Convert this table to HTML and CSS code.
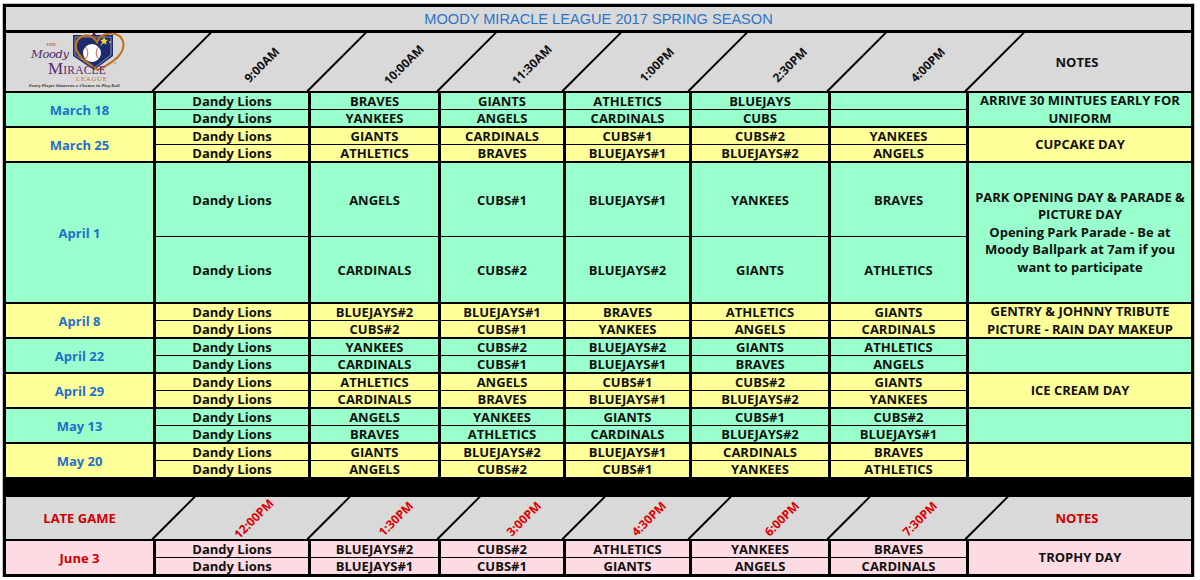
FILE: index.html
```html
<!DOCTYPE html>
<html>
<head>
<meta charset="utf-8">
<title>Moody Miracle League 2017 Spring Season</title>
<link rel="stylesheet" href="styles.css">
</head>
<body>
<div class="sheet">
  <div class="title">MOODY MIRACLE LEAGUE 2017 SPRING SEASON</div>

  <div class="head main">
    <div class="logo-cell">
      <svg class="logo" width="147" height="58" viewBox="0 0 147 58">
        <path d="M88 -1 l2 2.5 -2 1.2 -2 -1.2z" fill="#7a2340"/>
        <path d="M67 2 H107 V23 L88 37 L67 23 Z" fill="#1d2a6b"/>
        <path d="M69 4 H105 V22 L88 35 L69 22 Z" fill="none" stroke="#b9bfd3" stroke-width="0.7"/>
        <path d="M92 37 C80 29 68 21 70 11 C71 4 80 0 86 4 C88 5 90 7 91 9 C93 3 101 -1 109 1 C117 3 120 12 115 20 C111 27 100 33 92 37" fill="none" stroke="#c0741f" stroke-width="2.2" stroke-linecap="round"/>
        <circle cx="86" cy="20" r="9" fill="#ffffff"/>
        <path d="M79.5 14 C82.5 17 82.5 23 79.5 26 M92.5 14 C89.5 17 89.5 23 92.5 26" fill="none" stroke="#c03030" stroke-width="0.8"/>
        <path d="M98 4 l1.2 2.6 2.8 0.3 -2.1 1.9 0.6 2.8 -2.5 -1.4 -2.5 1.4 0.6 -2.8 -2.1 -1.9 2.8 -0.3z" fill="#f2d43a"/>
        <circle cx="104" cy="9" r="0.9" fill="#f2d43a"/>
        <circle cx="95" cy="12" r="0.7" fill="#f2d43a"/>
        <text x="40" y="13" class="lg-the">THE</text>
        <text x="25" y="25" class="lg-moody">Moody</text>
        <text x="42" y="40.5" class="lg-miracle"><tspan class="lg-big">M</tspan>IRACLE</text>
        <text x="108" y="32" class="lg-reg">®</text>
        <text x="70" y="48" class="lg-league">LEAGUE</text>
        <text x="23" y="54" class="lg-tag">Every Player Deserves a Chance to Play Ball</text>
      </svg>
    </div>
    <div class="hcell"><span class="lbl">9:00AM</span></div>
    <div class="hcell"><span class="lbl">10:00AM</span></div>
    <div class="hcell"><span class="lbl">11:30AM</span></div>
    <div class="hcell"><span class="lbl">1:00PM</span></div>
    <div class="hcell"><span class="lbl">2:30PM</span></div>
    <div class="hcell"><span class="lbl">4:00PM</span></div>
    <div class="hcell notes-h"><span>NOTES</span></div>
  </div>

  <div class="body">
    <div class="group green">
      <div class="date">March 18</div>
      <div class="c">Dandy Lions</div><div class="c">Dandy Lions</div>
      <div class="c">BRAVES</div><div class="c">YANKEES</div>
      <div class="c">GIANTS</div><div class="c">ANGELS</div>
      <div class="c">ATHLETICS</div><div class="c">CARDINALS</div>
      <div class="c">BLUEJAYS</div><div class="c">CUBS</div>
      <div class="c"></div><div class="c"></div>
      <div class="note">ARRIVE 30 MINTUES EARLY FOR<br>UNIFORM</div>
    </div>
    <div class="group yellow">
      <div class="date">March 25</div>
      <div class="c">Dandy Lions</div><div class="c">Dandy Lions</div>
      <div class="c">GIANTS</div><div class="c">ATHLETICS</div>
      <div class="c">CARDINALS</div><div class="c">BRAVES</div>
      <div class="c">CUBS#1</div><div class="c">BLUEJAYS#1</div>
      <div class="c">CUBS#2</div><div class="c">BLUEJAYS#2</div>
      <div class="c">YANKEES</div><div class="c">ANGELS</div>
      <div class="note">CUPCAKE DAY</div>
    </div>
    <div class="group green tall">
      <div class="date">April 1</div>
      <div class="c">Dandy Lions</div><div class="c">Dandy Lions</div>
      <div class="c">ANGELS</div><div class="c">CARDINALS</div>
      <div class="c">CUBS#1</div><div class="c">CUBS#2</div>
      <div class="c">BLUEJAYS#1</div><div class="c">BLUEJAYS#2</div>
      <div class="c">YANKEES</div><div class="c">GIANTS</div>
      <div class="c">BRAVES</div><div class="c">ATHLETICS</div>
      <div class="note">PARK OPENING DAY &amp; PARADE &amp;<br>PICTURE DAY<br>Opening Park Parade - Be at<br>Moody Ballpark at 7am if you<br>want to participate</div>
    </div>
    <div class="group yellow">
      <div class="date">April 8</div>
      <div class="c">Dandy Lions</div><div class="c">Dandy Lions</div>
      <div class="c">BLUEJAYS#2</div><div class="c">CUBS#2</div>
      <div class="c">BLUEJAYS#1</div><div class="c">CUBS#1</div>
      <div class="c">BRAVES</div><div class="c">YANKEES</div>
      <div class="c">ATHLETICS</div><div class="c">ANGELS</div>
      <div class="c">GIANTS</div><div class="c">CARDINALS</div>
      <div class="note">GENTRY &amp; JOHNNY TRIBUTE<br>PICTURE - RAIN DAY MAKEUP</div>
    </div>
    <div class="group green">
      <div class="date">April 22</div>
      <div class="c">Dandy Lions</div><div class="c">Dandy Lions</div>
      <div class="c">YANKEES</div><div class="c">CARDINALS</div>
      <div class="c">CUBS#2</div><div class="c">CUBS#1</div>
      <div class="c">BLUEJAYS#2</div><div class="c">BLUEJAYS#1</div>
      <div class="c">GIANTS</div><div class="c">BRAVES</div>
      <div class="c">ATHLETICS</div><div class="c">ANGELS</div>
      <div class="note"></div>
    </div>
    <div class="group yellow">
      <div class="date">April 29</div>
      <div class="c">Dandy Lions</div><div class="c">Dandy Lions</div>
      <div class="c">ATHLETICS</div><div class="c">CARDINALS</div>
      <div class="c">ANGELS</div><div class="c">BRAVES</div>
      <div class="c">CUBS#1</div><div class="c">BLUEJAYS#1</div>
      <div class="c">CUBS#2</div><div class="c">BLUEJAYS#2</div>
      <div class="c">GIANTS</div><div class="c">YANKEES</div>
      <div class="note">ICE CREAM DAY</div>
    </div>
    <div class="group green">
      <div class="date">May 13</div>
      <div class="c">Dandy Lions</div><div class="c">Dandy Lions</div>
      <div class="c">ANGELS</div><div class="c">BRAVES</div>
      <div class="c">YANKEES</div><div class="c">ATHLETICS</div>
      <div class="c">GIANTS</div><div class="c">CARDINALS</div>
      <div class="c">CUBS#1</div><div class="c">BLUEJAYS#2</div>
      <div class="c">CUBS#2</div><div class="c">BLUEJAYS#1</div>
      <div class="note"></div>
    </div>
    <div class="group yellow">
      <div class="date">May 20</div>
      <div class="c">Dandy Lions</div><div class="c">Dandy Lions</div>
      <div class="c">GIANTS</div><div class="c">ANGELS</div>
      <div class="c">BLUEJAYS#2</div><div class="c">CUBS#2</div>
      <div class="c">BLUEJAYS#1</div><div class="c">CUBS#1</div>
      <div class="c">CARDINALS</div><div class="c">YANKEES</div>
      <div class="c">BRAVES</div><div class="c">ATHLETICS</div>
      <div class="note"></div>
    </div>
  </div>

  <div class="band"></div>

  <div class="head late">
    <div class="late-title">LATE GAME</div>
    <div class="hcell"><span class="lbl">12:00PM</span></div>
    <div class="hcell"><span class="lbl">1:30PM</span></div>
    <div class="hcell"><span class="lbl">3:00PM</span></div>
    <div class="hcell"><span class="lbl">4:30PM</span></div>
    <div class="hcell"><span class="lbl">6:00PM</span></div>
    <div class="hcell"><span class="lbl">7:30PM</span></div>
    <div class="hcell notes-h"><span>NOTES</span></div>
  </div>

  <div class="body">
    <div class="group pink">
      <div class="date red">June 3</div>
      <div class="c">Dandy Lions</div><div class="c">Dandy Lions</div>
      <div class="c">BLUEJAYS#2</div><div class="c">BLUEJAYS#1</div>
      <div class="c">CUBS#2</div><div class="c">CUBS#1</div>
      <div class="c">ATHLETICS</div><div class="c">GIANTS</div>
      <div class="c">YANKEES</div><div class="c">ANGELS</div>
      <div class="c">BRAVES</div><div class="c">CARDINALS</div>
      <div class="note">TROPHY DAY</div>
    </div>
  </div>
</div>
</body>
</html>
```

FILE: styles.css
```css
html, body {
  margin: 0;
  padding: 0;
  background: #ffffff;
}

body {
  font-family: "Open Sans", "Noto Sans", sans-serif;
  color: #111111;
}

.sheet {
  margin: 4px 0 0 3px;
  width: 1185px;
  border: 3px solid #000000;
  box-shadow: 0 0 0 1px #c4c4c4;
}

.title {
  height: 23px;
  line-height: 24px;
  background: #d9d9d9;
  border-bottom: 3px solid #000000;
  text-align: center;
  font-family: "Liberation Sans", Arial, sans-serif;
  font-size: 14.6px;
  color: #2c73c8;
}

/* header rows */
.head {
  display: grid;
  grid-template-columns: 147px 155px 130px 125px 126px 139px 138px 225px;
  background: #d9d9d9;
  border-bottom: 2px solid #000000;
}

.head.main { height: 58px; }
.head.late { height: 42px; }

.hcell {
  position: relative;
}

.hcell::before {
  content: "";
  position: absolute;
  left: 0;
  bottom: -1px;
  height: 2px;
  background: #000000;
  transform-origin: 0 100%;
  transform: rotate(-45deg);
}

.main .hcell::before { width: 84px; }
.late .hcell::before { width: 61px; }

.lbl {
  position: absolute;
  top: 50%;
  white-space: nowrap;
  font-weight: 700;
  font-size: 12px;
  line-height: 14px;
}

.main .lbl {
  left: calc(50% + 31px);
  transform: translate(-50%, -50%) translateY(3px) rotate(-45deg);
}

.late .lbl {
  left: calc(50% + 23px);
  color: #e00000;
  transform: translate(-50%, -50%) translateY(1px) rotate(-45deg);
}

.notes-h {
  display: flex;
  align-items: center;
  justify-content: center;
  font-weight: 700;
  font-size: 13px;
  padding-right: 3px;
}

.late .notes-h { color: #d00000; }

.late-title {
  display: flex;
  align-items: center;
  justify-content: center;
  font-weight: 700;
  font-size: 13px;
  color: #d00000;
}

.logo-cell {
  position: relative;
}

.logo { display: block; }

.lg-the {
  font-family: "Liberation Serif", serif;
  font-size: 5px;
  font-weight: 700;
  fill: #c0741f;
}

.lg-moody {
  font-family: "DejaVu Serif", serif;
  font-style: italic;
  font-size: 11.5px;
  fill: #4a2a66;
  letter-spacing: -0.4px;
}

.lg-miracle {
  font-family: "Liberation Serif", serif;
  font-size: 11.5px;
  fill: #5b2870;
  letter-spacing: 0.2px;
}

.lg-big { font-size: 17px; }

.lg-reg {
  font-family: "Liberation Sans", sans-serif;
  font-size: 3px;
  fill: #5b2870;
}

.lg-league {
  font-family: "Liberation Serif", serif;
  font-size: 7px;
  fill: #c0741f;
  letter-spacing: 0.6px;
}

.lg-tag {
  font-family: "DejaVu Serif", serif;
  font-style: italic;
  font-weight: 700;
  font-size: 3.7px;
  fill: #333333;
}

/* body */
.body {
  display: flex;
  flex-direction: column;
  gap: 2px;
  background: #000000;
}

.group {
  display: grid;
  grid-template-columns: 147px 152px 127px 122px 123px 136px 135px 222px;
  grid-template-rows: 16px 16px;
  grid-auto-flow: column;
  column-gap: 3px;
  row-gap: 1px;
  background: #000000;
}

.group.tall {
  grid-template-rows: 73px 65px;
}

.group > div {
  display: flex;
  align-items: center;
  justify-content: center;
  text-align: center;
  font-weight: 700;
  font-size: 13px;
  line-height: 16px;
  white-space: nowrap;
}

.green > div { background: #99ffcc; }
.yellow > div { background: #ffff99; }
.pink > div { background: #fddbe3; }

.group > .date {
  grid-row: span 2;
  color: #1f6fcc;
}

.group > .date.red { color: #d00000; }

.group > .note {
  grid-row: span 2;
  line-height: 17.5px;
}

.band {
  height: 20px;
  background: #000000;
}
```
